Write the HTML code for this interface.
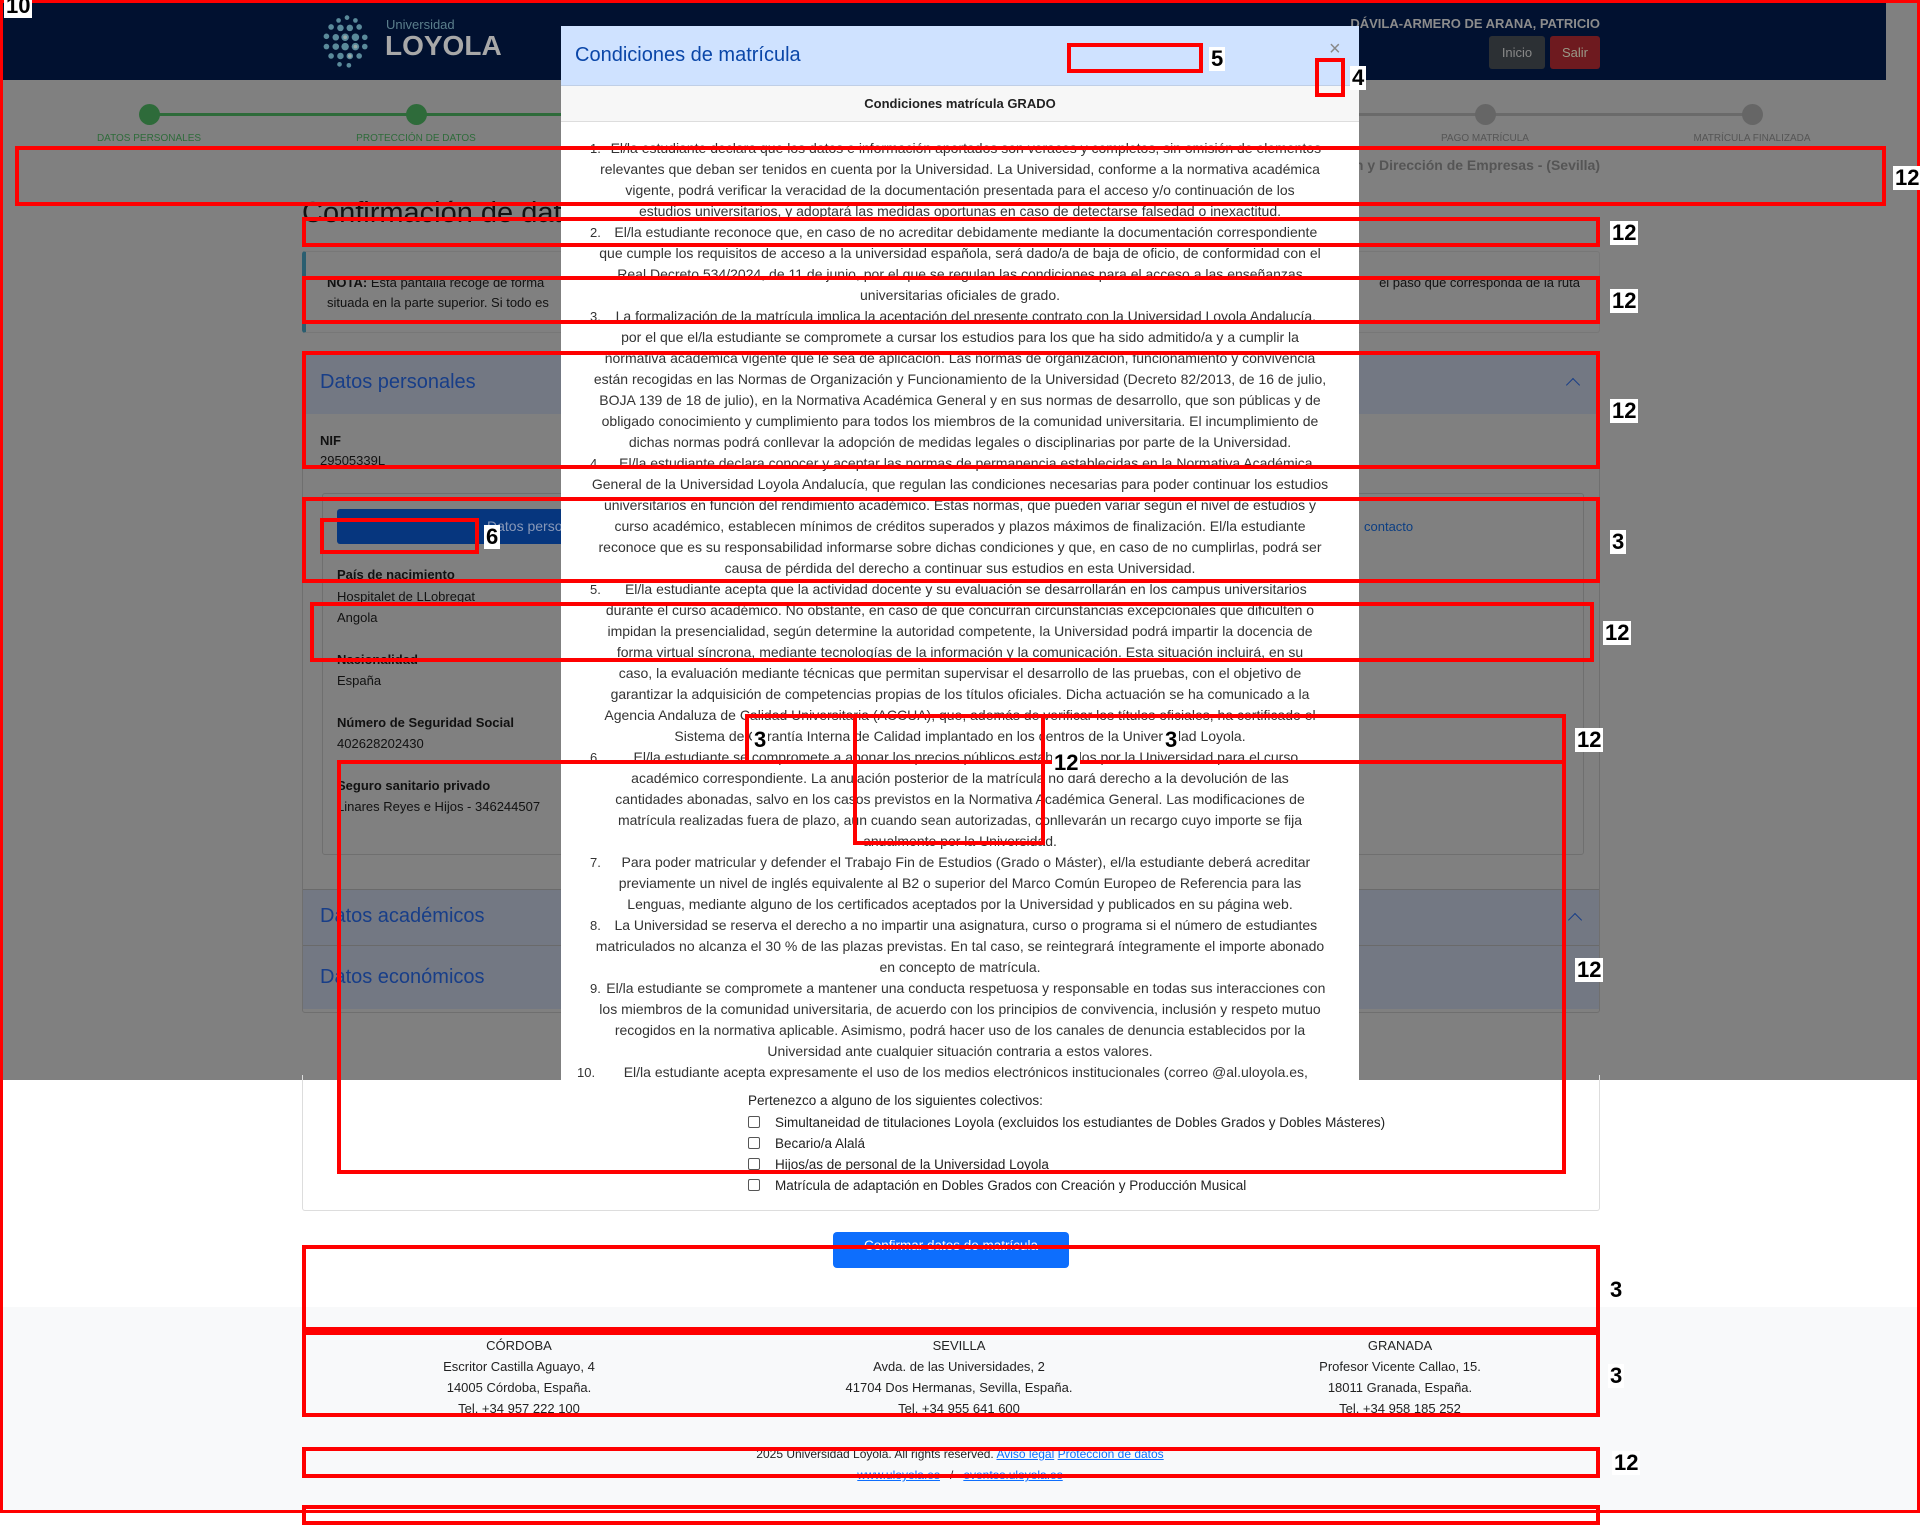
<!DOCTYPE html>
<html><head><meta charset="utf-8"><style>
*{box-sizing:border-box;margin:0;padding:0}
body{width:1920px;height:1513px;position:relative;background:#fff;font-family:"Liberation Sans",sans-serif;overflow:hidden;color:#222}
.a{position:absolute;white-space:nowrap}
.rb{position:absolute;border:4px solid #f00;z-index:50}
.lb{position:absolute;background:#fff;color:#000;font-weight:bold;font-size:22px;line-height:24px;padding:0 2px;z-index:51}
.md{position:absolute;left:561px;top:26px;width:798px;height:1054px;background:#fff;z-index:20;overflow:hidden}
.ln{position:absolute;left:0;width:798px;text-align:center;font-size:14px;line-height:21px;color:#333;white-space:nowrap}
.nm{position:absolute;font-size:13px;line-height:21px;color:#333}
.lab{font-weight:bold;font-size:13px;color:#111}
.val{font-size:13px;color:#111}
.ft{font-size:13px;color:#222;text-align:center;width:400px}
</style></head><body>
<div class="a" style="left:0;top:0;width:1886px;height:80px;background:#011130"></div>
<div class="a" style="left:0;top:80px;width:1920px;height:1000px;background:#808080"></div>
<div class="a" style="left:1886px;top:0;width:34px;height:80px;background:#808080"></div>
<svg class="a" style="left:318px;top:12px" width="58" height="58" viewBox="0 0 62 62">
<g fill="#5a8a9a">
<circle cx="31" cy="6" r="2.5"/><circle cx="22" cy="9" r="2.5"/><circle cx="40" cy="9" r="2.5"/>
<circle cx="14" cy="16" r="3"/><circle cx="24" cy="17" r="3.5"/><circle cx="34" cy="17" r="3.5"/><circle cx="44" cy="16" r="3"/>
<circle cx="9" cy="26" r="3"/><circle cx="19" cy="27" r="3.5"/><circle cx="29" cy="27" r="4"/><circle cx="40" cy="27" r="4"/><circle cx="50" cy="27" r="3"/>
<circle cx="9" cy="37" r="3"/><circle cx="19" cy="37" r="3.5"/><circle cx="29" cy="37" r="4"/><circle cx="40" cy="37" r="4"/><circle cx="50" cy="37" r="3"/>
<circle cx="14" cy="47" r="3"/><circle cx="24" cy="47" r="3.5"/><circle cx="34" cy="47" r="3.5"/><circle cx="44" cy="47" r="3"/>
<circle cx="23" cy="56" r="2.5"/><circle cx="33" cy="57" r="2.5"/>
</g><g fill="#9aa">
<circle cx="29" cy="27" r="2"/><circle cx="40" cy="37" r="2"/><circle cx="34" cy="47" r="2"/></g></svg>
<div class="a" style="left:386px;top:17px;font-size:13px;color:#5b7f8c">Universidad</div>
<div class="a" style="left:385px;top:30px;font-size:28px;font-weight:bold;color:#a8a8a8">LOYOLA</div>
<div class="a" style="right:320px;top:16px;font-size:13px;font-weight:bold;color:#8c8c8c">DÁVILA-ARMERO DE ARANA, PATRICIO</div>
<div class="a" style="left:1489px;top:36px;width:56px;height:33px;background:#2c3034;border-radius:3px;color:#888;font-size:13px;line-height:33px;text-align:center">Inicio</div>
<div class="a" style="left:1550px;top:36px;width:50px;height:33px;background:#6e1a1f;border-radius:3px;color:#998;font-size:13px;line-height:33px;text-align:center">Salir</div>
<div class="a" style="left:149px;top:113px;width:1603px;height:3px;background:#6a6a6a"></div>
<div class="a" style="left:149px;top:113px;width:534px;height:3px;background:#2e6b3a"></div>
<div class="a" style="left:139px;top:104px;width:21px;height:21px;border-radius:50%;background:#2e6b3a"></div>
<div class="a" style="left:406px;top:104px;width:21px;height:21px;border-radius:50%;background:#2e6b3a"></div>
<div class="a" style="left:1475px;top:104px;width:21px;height:21px;border-radius:50%;background:#666"></div>
<div class="a" style="left:1742px;top:104px;width:21px;height:21px;border-radius:50%;background:#666"></div>
<div class="a" style="left:89px;top:133px;width:120px;text-align:center;font-size:10px;color:#2e6b3a">DATOS PERSONALES</div>
<div class="a" style="left:346px;top:133px;width:140px;text-align:center;font-size:10px;color:#2e6b3a">PROTECCIÓN DE DATOS</div>
<div class="a" style="left:1415px;top:133px;width:140px;text-align:center;font-size:10px;color:#555">PAGO MATRÍCULA</div>
<div class="a" style="left:1682px;top:133px;width:140px;text-align:center;font-size:10px;color:#555">MATRÍCULA FINALIZADA</div>
<div class="a" style="right:320px;top:157px;font-size:14px;font-weight:bold;color:#555">Grado en Administración y Dirección de Empresas - (Sevilla)</div>
<div class="a" style="left:302px;top:197px;font-size:29px;color:#111">Confirmación de datos</div>
<div class="a" style="left:302px;top:251px;width:1298px;height:82px;border:1px solid #777;border-left:4px solid #2a5e70;border-radius:3px"></div>
<div class="a" style="left:327px;top:275px;font-size:13px;color:#111"><b>NOTA:</b> Esta pantalla recoge de forma</div>
<div class="a" style="left:327px;top:295px;font-size:13px;color:#111">situada en la parte superior. Si todo es</div>
<div class="a" style="right:340px;top:275px;font-size:13px;color:#111">el paso que corresponda de la ruta</div>
<div class="a" style="left:302px;top:353px;width:1298px;height:660px;border:1px solid #6f6f6f;border-radius:3px"></div>
<div class="a" style="left:303px;top:354px;width:1296px;height:60px;background:#737883"></div>
<div class="a" style="left:320px;top:371px;font-size:20px;color:#183e88">Datos personales</div>
<div class="a" style="left:1568px;top:380px;width:10px;height:10px;border-left:1.5px solid #183e88;border-top:1.5px solid #183e88;transform:rotate(45deg)"></div>
<div class="a lab" style="left:320px;top:433px">NIF</div>
<div class="a val" style="left:320px;top:453px">29505339L</div>
<div class="a" style="left:322px;top:493px;width:1262px;height:362px;border:1px solid #6f6f6f;border-radius:3px"></div>
<div class="a" style="left:337px;top:509px;width:240px;height:35px;background:#06367e;border-radius:3px;color:#8898b8;font-size:14px;line-height:35px;padding-left:150px">Datos perso</div>
<div class="a" style="left:1364px;top:519px;font-size:13px;color:#0c3e82">contacto</div>
<div class="a lab" style="left:337px;top:567px">País de nacimiento</div>
<div class="a val" style="left:337px;top:589px">Hospitalet de LLobregat</div>
<div class="a val" style="left:337px;top:610px">Angola</div>
<div class="a lab" style="left:337px;top:652px">Nacionalidad</div>
<div class="a val" style="left:337px;top:673px">España</div>
<div class="a lab" style="left:337px;top:715px">Número de Seguridad Social</div>
<div class="a val" style="left:337px;top:736px">402628202430</div>
<div class="a lab" style="left:337px;top:778px">Seguro sanitario privado</div>
<div class="a val" style="left:337px;top:799px">Linares Reyes e Hijos - 346244507</div>
<div class="a" style="left:303px;top:889px;width:1296px;height:56px;background:#737883;border-top:1px solid #6a6a6a"></div>
<div class="a" style="left:320px;top:905px;font-size:20px;color:#183e88">Datos académicos</div>
<div class="a" style="left:1570px;top:915px;width:10px;height:10px;border-left:1.5px solid #183e88;border-top:1.5px solid #183e88;transform:rotate(45deg)"></div>
<div class="a" style="left:303px;top:945px;width:1296px;height:64px;background:#737883;border-top:1px solid #6a6a6a"></div>
<div class="a" style="left:320px;top:966px;font-size:20px;color:#183e88">Datos económicos</div>
<div class="a" style="left:302px;top:1075px;width:1298px;height:136px;border:1px solid #ddd;border-top:none;border-radius:0 0 3px 3px"></div>
<div class="a" style="left:748px;top:1093px;font-size:13.5px;color:#222">Pertenezco a alguno de los siguientes colectivos:</div>
<div class="a" style="left:748px;top:1112px;font-size:13.5px;color:#222;line-height:21px">
<div><span style="display:inline-block;width:12px;height:12px;border:1px solid #555;border-radius:2px;vertical-align:-1px;margin-right:15px"></span>Simultaneidad de titulaciones Loyola (excluidos los estudiantes de Dobles Grados y Dobles Másteres)</div>
<div><span style="display:inline-block;width:12px;height:12px;border:1px solid #555;border-radius:2px;vertical-align:-1px;margin-right:15px"></span>Becario/a Alalá</div>
<div><span style="display:inline-block;width:12px;height:12px;border:1px solid #555;border-radius:2px;vertical-align:-1px;margin-right:15px"></span>Hijos/as de personal de la Universidad Loyola</div>
<div><span style="display:inline-block;width:12px;height:12px;border:1px solid #555;border-radius:2px;vertical-align:-1px;margin-right:15px"></span>Matrícula de adaptación en Dobles Grados con Creación y Producción Musical</div>
</div>
<div class="a" style="left:833px;top:1232px;width:236px;height:36px;background:#0d6efd;border-radius:4px;color:#fff;font-size:13.5px;text-align:center;line-height:28px">Confirmar datos de matrícula</div>
<div class="a" style="left:0;top:1307px;width:1920px;height:206px;background:#f8f9fa"></div>
<div class="a ft" style="left:319px;top:1335px;line-height:21px">CÓRDOBA<br>Escritor Castilla Aguayo, 4<br>14005 Córdoba, España.<br>Tel. +34 957 222 100</div>
<div class="a ft" style="left:759px;top:1335px;line-height:21px">SEVILLA<br>Avda. de las Universidades, 2<br>41704 Dos Hermanas, Sevilla, España.<br>Tel. +34 955 641 600</div>
<div class="a ft" style="left:1200px;top:1335px;line-height:21px">GRANADA<br>Profesor Vicente Callao, 15.<br>18011 Granada, España.<br>Tel. +34 958 185 252</div>
<div class="a" style="left:0;top:1447px;width:1920px;text-align:center;font-size:12px;color:#222">2025 Universidad Loyola. All rights reserved. <span style="color:#0d6efd;text-decoration:underline">Aviso legal</span> <span style="color:#0d6efd;text-decoration:underline">Protección de datos</span></div>
<div class="a" style="left:0;top:1468px;width:1920px;text-align:center;font-size:12px;color:#222"><span style="color:#0d6efd;text-decoration:underline">www.uloyola.es</span> &nbsp; / &nbsp; <span style="color:#0d6efd;text-decoration:underline">eventos.uloyola.es</span></div>
<div class="md">
<div class="a" style="left:0;top:0;width:798px;height:60px;background:#cfe2ff;border-bottom:1px solid #c0cfe6"></div>
<div class="a" style="left:14px;top:18px;font-size:20px;color:#0a46a8">Condiciones de matrícula</div>
<div class="a" style="left:768px;top:12px;font-size:20px;color:#888">×</div>
<div class="a" style="left:0;top:60px;width:798px;height:36px;background:#f7f7f7;border-bottom:1px solid #ddd"></div>
<div class="a" style="left:0;top:70px;width:798px;text-align:center;font-size:13px;font-weight:bold;color:#222">Condiciones matrícula GRADO</div>
<div class="a" style="left:0;top:96px;width:798px;height:960px">
<div class="nm" style="left:29px;top:16px">1.</div>
<div class="ln" style="top:16px">&nbsp;&nbsp;&nbsp;El/la estudiante declara que los datos e información aportados son veraces y completos, sin omisión de elementos</div>
<div class="ln" style="top:37px">relevantes que deban ser tenidos en cuenta por la Universidad. La Universidad, conforme a la normativa académica</div>
<div class="ln" style="top:58px">vigente, podrá verificar la veracidad de la documentación presentada para el acceso y/o continuación de los</div>
<div class="ln" style="top:79px">estudios universitarios, y adoptará las medidas oportunas en caso de detectarse falsedad o inexactitud.</div>
<div class="nm" style="left:29px;top:100px">2.</div>
<div class="ln" style="top:100px">&nbsp;&nbsp;&nbsp;El/la estudiante reconoce que, en caso de no acreditar debidamente mediante la documentación correspondiente</div>
<div class="ln" style="top:121px">que cumple los requisitos de acceso a la universidad española, será dado/a de baja de oficio, de conformidad con el</div>
<div class="ln" style="top:142px">Real Decreto 534/2024, de 11 de junio, por el que se regulan las condiciones para el acceso a las enseñanzas</div>
<div class="ln" style="top:163px">universitarias oficiales de grado.</div>
<div class="nm" style="left:29px;top:184px">3.</div>
<div class="ln" style="top:184px">&nbsp;&nbsp;&nbsp;La formalización de la matrícula implica la aceptación del presente contrato con la Universidad Loyola Andalucía,</div>
<div class="ln" style="top:205px">por el que el/la estudiante se compromete a cursar los estudios para los que ha sido admitido/a y a cumplir la</div>
<div class="ln" style="top:226px">normativa académica vigente que le sea de aplicación. Las normas de organización, funcionamiento y convivencia</div>
<div class="ln" style="top:247px">están recogidas en las Normas de Organización y Funcionamiento de la Universidad (Decreto 82/2013, de 16 de julio,</div>
<div class="ln" style="top:268px">BOJA 139 de 18 de julio), en la Normativa Académica General y en sus normas de desarrollo, que son públicas y de</div>
<div class="ln" style="top:289px">obligado conocimiento y cumplimiento para todos los miembros de la comunidad universitaria. El incumplimiento de</div>
<div class="ln" style="top:310px">dichas normas podrá conllevar la adopción de medidas legales o disciplinarias por parte de la Universidad.</div>
<div class="nm" style="left:29px;top:331px">4.</div>
<div class="ln" style="top:331px">&nbsp;&nbsp;&nbsp;El/la estudiante declara conocer y aceptar las normas de permanencia establecidas en la Normativa Académica</div>
<div class="ln" style="top:352px">General de la Universidad Loyola Andalucía, que regulan las condiciones necesarias para poder continuar los estudios</div>
<div class="ln" style="top:373px">universitarios en función del rendimiento académico. Estas normas, que pueden variar según el nivel de estudios y</div>
<div class="ln" style="top:394px">curso académico, establecen mínimos de créditos superados y plazos máximos de finalización. El/la estudiante</div>
<div class="ln" style="top:415px">reconoce que es su responsabilidad informarse sobre dichas condiciones y que, en caso de no cumplirlas, podrá ser</div>
<div class="ln" style="top:436px">causa de pérdida del derecho a continuar sus estudios en esta Universidad.</div>
<div class="nm" style="left:29px;top:457px">5.</div>
<div class="ln" style="top:457px">&nbsp;&nbsp;&nbsp;El/la estudiante acepta que la actividad docente y su evaluación se desarrollarán en los campus universitarios</div>
<div class="ln" style="top:478px">durante el curso académico. No obstante, en caso de que concurran circunstancias excepcionales que dificulten o</div>
<div class="ln" style="top:499px">impidan la presencialidad, según determine la autoridad competente, la Universidad podrá impartir la docencia de</div>
<div class="ln" style="top:520px">forma virtual síncrona, mediante tecnologías de la información y la comunicación. Esta situación incluirá, en su</div>
<div class="ln" style="top:541px">caso, la evaluación mediante técnicas que permitan supervisar el desarrollo de las pruebas, con el objetivo de</div>
<div class="ln" style="top:562px">garantizar la adquisición de competencias propias de los títulos oficiales. Dicha actuación se ha comunicado a la</div>
<div class="ln" style="top:583px">Agencia Andaluza de Calidad Universitaria (ACCUA), que, además de verificar los títulos oficiales, ha certificado el</div>
<div class="ln" style="top:604px">Sistema de Garantía Interna de Calidad implantado en los centros de la Universidad Loyola.</div>
<div class="nm" style="left:29px;top:625px">6.</div>
<div class="ln" style="top:625px">&nbsp;&nbsp;&nbsp;El/la estudiante se compromete a abonar los precios públicos establecidos por la Universidad para el curso</div>
<div class="ln" style="top:646px">académico correspondiente. La anulación posterior de la matrícula no dará derecho a la devolución de las</div>
<div class="ln" style="top:667px">cantidades abonadas, salvo en los casos previstos en la Normativa Académica General. Las modificaciones de</div>
<div class="ln" style="top:688px">matrícula realizadas fuera de plazo, aun cuando sean autorizadas, conllevarán un recargo cuyo importe se fija</div>
<div class="ln" style="top:709px">anualmente por la Universidad.</div>
<div class="nm" style="left:29px;top:730px">7.</div>
<div class="ln" style="top:730px">&nbsp;&nbsp;&nbsp;Para poder matricular y defender el Trabajo Fin de Estudios (Grado o Máster), el/la estudiante deberá acreditar</div>
<div class="ln" style="top:751px">previamente un nivel de inglés equivalente al B2 o superior del Marco Común Europeo de Referencia para las</div>
<div class="ln" style="top:772px">Lenguas, mediante alguno de los certificados aceptados por la Universidad y publicados en su página web.</div>
<div class="nm" style="left:29px;top:793px">8.</div>
<div class="ln" style="top:793px">&nbsp;&nbsp;&nbsp;La Universidad se reserva el derecho a no impartir una asignatura, curso o programa si el número de estudiantes</div>
<div class="ln" style="top:814px">matriculados no alcanza el 30 % de las plazas previstas. En tal caso, se reintegrará íntegramente el importe abonado</div>
<div class="ln" style="top:835px">en concepto de matrícula.</div>
<div class="nm" style="left:29px;top:856px">9.</div>
<div class="ln" style="top:856px">&nbsp;&nbsp;&nbsp;El/la estudiante se compromete a mantener una conducta respetuosa y responsable en todas sus interacciones con</div>
<div class="ln" style="top:877px">los miembros de la comunidad universitaria, de acuerdo con los principios de convivencia, inclusión y respeto mutuo</div>
<div class="ln" style="top:898px">recogidos en la normativa aplicable. Asimismo, podrá hacer uso de los canales de denuncia establecidos por la</div>
<div class="ln" style="top:919px">Universidad ante cualquier situación contraria a estos valores.</div>
<div class="nm" style="left:16px;top:940px">10.</div>
<div class="ln" style="top:940px">&nbsp;&nbsp;&nbsp;El/la estudiante acepta expresamente el uso de los medios electrónicos institucionales (correo @al.uloyola.es,</div>
</div>
</div>
<div class="rb" style="left:0;top:0;width:1920px;height:1513px;border-width:3px"></div>
<div class="lb" style="left:4px;top:-6px">10</div>
<div class="rb" style="left:15px;top:146px;width:1871px;height:60px"></div><div class="lb" style="left:1893px;top:166px">12</div>
<div class="rb" style="left:302px;top:217px;width:1298px;height:30px"></div><div class="lb" style="left:1610px;top:221px">12</div>
<div class="rb" style="left:302px;top:276px;width:1298px;height:48px"></div><div class="lb" style="left:1610px;top:289px">12</div>
<div class="rb" style="left:302px;top:351px;width:1298px;height:118px"></div><div class="lb" style="left:1610px;top:399px">12</div>
<div class="rb" style="left:302px;top:497px;width:1298px;height:86px"></div><div class="lb" style="left:1610px;top:530px">3</div>
<div class="rb" style="left:310px;top:602px;width:1284px;height:60px"></div><div class="lb" style="left:1603px;top:621px">12</div>
<div class="rb" style="left:745px;top:714px;width:821px;height:50px"></div><div class="lb" style="left:1575px;top:728px">12</div>
<div class="rb" style="left:337px;top:760px;width:1229px;height:414px"></div><div class="lb" style="left:1575px;top:958px">12</div>
<div class="rb" style="left:853px;top:714px;width:192px;height:131px"></div><div class="lb" style="left:1052px;top:751px">12</div>
<div class="lb" style="left:752px;top:728px">3</div><div class="lb" style="left:1163px;top:728px">3</div>
<div class="rb" style="left:1067px;top:43px;width:136px;height:30px"></div><div class="lb" style="left:1209px;top:47px">5</div>
<div class="rb" style="left:1315px;top:58px;width:30px;height:39px"></div><div class="lb" style="left:1350px;top:66px">4</div>
<div class="rb" style="left:320px;top:518px;width:159px;height:36px"></div><div class="lb" style="left:484px;top:525px">6</div>
<div class="rb" style="left:302px;top:1245px;width:1298px;height:86px"></div><div class="lb" style="left:1608px;top:1278px">3</div>
<div class="rb" style="left:302px;top:1331px;width:1298px;height:86px"></div><div class="lb" style="left:1608px;top:1364px">3</div>
<div class="rb" style="left:302px;top:1447px;width:1298px;height:31px"></div><div class="lb" style="left:1612px;top:1451px">12</div>
<div class="rb" style="left:302px;top:1505px;width:1298px;height:20px"></div>
</body></html>
